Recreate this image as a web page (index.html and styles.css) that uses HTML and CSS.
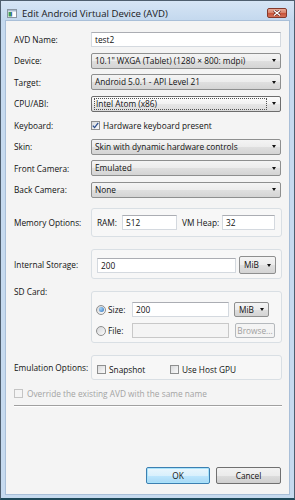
FILE: index.html
```html
<!DOCTYPE html>
<html lang="en">
<head>
    <meta charset="UTF-8">
    <title>Edit Android Virtual Device (AVD)</title>
    <link rel="stylesheet" href="styles.css">
</head>
<body>
    <div class="window">
        <!-- Barra de título -->
        <div class="titlebar">
            <svg class="app-icon" width="10" height="9" viewBox="0 0 10 9">
                <rect x="0.5" y="0.5" width="9" height="8" fill="#fdfdfd" stroke="#8a96a3"/>
                <rect x="1" y="1" width="8" height="1.5" fill="#a9bccf"/>
                <rect x="1.5" y="3" width="2.5" height="4.5" fill="#3f9b52"/>
                <rect x="4" y="3" width="1.2" height="4.5" fill="#3a78c0"/>
            </svg>
            <span class="title">Edit Android Virtual Device (AVD)</span>
            <div class="close-btn">
                <svg width="8" height="6" viewBox="0 0 8 6">
                    <path d="M1 0.5 L7 5.5 M7 0.5 L1 5.5" stroke="#5a1c12" stroke-width="2.6"/>
                    <path d="M1 0.5 L7 5.5 M7 0.5 L1 5.5" stroke="#fff" stroke-width="1.4"/>
                </svg>
            </div>
        </div>

        <div class="client">
            <div class="row">
                <span class="lbl">AVD Name:</span>
                <div class="textbox">test2</div>
            </div>
            <div class="row">
                <span class="lbl">Device:</span>
                <div class="combo"><span class="combo-text">10.1" WXGA (Tablet) (1280 × 800: mdpi)</span><span class="arrow"></span></div>
            </div>
            <div class="row">
                <span class="lbl">Target:</span>
                <div class="combo"><span class="combo-text">Android 5.0.1 - API Level 21</span><span class="arrow"></span></div>
            </div>
            <div class="row">
                <span class="lbl">CPU/ABI:</span>
                <div class="combo focus"><span class="combo-text">Intel Atom (x86)</span><span class="arrow"></span></div>
            </div>
            <div class="row">
                <span class="lbl">Keyboard:</span>
                <span class="check checked">
                    <svg width="7" height="7" viewBox="0 0 7 7"><path d="M0.8 3.6 L2.6 5.6 L6.2 0.9" fill="none" stroke="#2b4f8f" stroke-width="1.3"/></svg>
                </span>
                <span class="check-text">Hardware keyboard present</span>
            </div>
            <div class="row">
                <span class="lbl">Skin:</span>
                <div class="combo"><span class="combo-text">Skin with dynamic hardware controls</span><span class="arrow"></span></div>
            </div>
            <div class="row">
                <span class="lbl">Front Camera:</span>
                <div class="combo"><span class="combo-text">Emulated</span><span class="arrow"></span></div>
            </div>
            <div class="row">
                <span class="lbl">Back Camera:</span>
                <div class="combo"><span class="combo-text">None</span><span class="arrow"></span></div>
            </div>

            <!-- Memoria -->
            <div class="group-row memory-row">
                <span class="lbl">Memory Options:</span>
                <div class="group memory">
                    <span class="mem-lbl ram">RAM:</span>
                    <div class="textbox ram-box">512</div>
                    <span class="mem-lbl heap">VM Heap:</span>
                    <div class="textbox heap-box">32</div>
                </div>
            </div>

            <!-- Almacenamiento interno -->
            <div class="group-row storage-row">
                <span class="lbl">Internal Storage:</span>
                <div class="group storage">
                    <div class="textbox storage-box">200</div>
                    <div class="combo unit-combo"><span class="combo-text">MiB</span><span class="arrow"></span></div>
                </div>
            </div>

            <!-- Tarjeta SD -->
            <div class="group-row sd-row">
                <span class="lbl">SD Card:</span>
                <div class="group sdcard">
                    <div class="sd-line">
                        <span class="radio selected"><span class="dot"></span></span>
                        <span class="radio-text">Size:</span>
                        <div class="textbox sd-box">200</div>
                        <div class="combo sd-combo"><span class="combo-text">MiB</span><span class="arrow"></span></div>
                    </div>
                    <div class="sd-line">
                        <span class="radio"></span>
                        <span class="radio-text">File:</span>
                        <div class="textbox sd-box disabled"></div>
                        <div class="browse-btn">Browse...</div>
                    </div>
                </div>
            </div>

            <!-- Emulación -->
            <div class="group-row emu-row">
                <span class="lbl">Emulation Options:</span>
                <div class="group emulation">
                    <div class="emu-item snapshot">
                        <span class="check"></span>
                        <span class="check-text">Snapshot</span>
                    </div>
                    <div class="emu-item">
                        <span class="check"></span>
                        <span class="check-text">Use Host GPU</span>
                    </div>
                </div>
            </div>

            <div class="override-row">
                <span class="check disabled"></span>
                <span class="check-text">Override the existing AVD with the same name</span>
            </div>

            <div class="separator"></div>

            <div class="buttons">
                <div class="btn default">OK</div>
                <div class="btn cancel">Cancel</div>
            </div>
        </div>
    </div>
</body>
</html>
```

FILE: styles.css
```css
* {
    margin: 0;
    padding: 0;
    box-sizing: border-box;
}

body {
    font-family: 'Open Sans', 'Noto Sans', sans-serif;
    font-size: 8.3px;
    color: #111111;
    background-color: #ffffff;
}

.window {
    width: 295px;
    height: 500px;
    border: 1px solid #4e5e6e;
    border-bottom: 2px solid #1f4a5a;
    background-color: #c6daef;
    display: flex;
    flex-direction: column;
}

/* Barra de título */
.titlebar {
    height: 20px;
    flex: none;
    display: flex;
    align-items: center;
    padding: 4px 7px 0 6px;
    background: linear-gradient(#d6e5f5, #c3d8ee);
}

.app-icon {
    flex: none;
}

.title {
    margin-left: 5px;
    font-size: 9.6px;
    color: #1a1a1a;
}

.close-btn {
    margin-left: auto;
    width: 20px;
    height: 10px;
    border: 1px solid #84392b;
    border-radius: 2px;
    background: linear-gradient(#eaaa98, #d8846c 45%, #c9543a 55%, #d47158);
    display: flex;
    align-items: center;
    justify-content: center;
}

/* Área de cliente */
.client {
    flex: 1;
    margin: 0 5px 4px;
    background-color: #f4f4f4;
    box-shadow: 0 0 0 1px #a9bfd8;
    display: flex;
    flex-direction: column;
    padding: 10px 7px 10px 8px;
}

.row {
    display: flex;
    align-items: center;
    height: 16px;
    margin-bottom: 5.5px;
}

.lbl {
    width: 77px;
    flex: none;
}

.textbox {
    height: 15px;
    background-color: #ffffff;
    border: 1px solid #d4d9df;
    border-top-color: #abadb3;
    padding-left: 3px;
    line-height: 13px;
}

.row .textbox {
    flex: 1;
    margin-right: 1px;
}

.textbox.disabled {
    background-color: #f4f4f4;
    border-color: #c8c8c8;
}

.combo {
    height: 16px;
    border: 1px solid #8e8f8f;
    border-radius: 2px;
    background: linear-gradient(#f4f4f4, #ececec 50%, #dfdfdf 51%, #d4d4d4);
    display: flex;
    align-items: center;
    padding: 0 4px 0 2px;
}

.row .combo {
    flex: 1;
    margin-right: 1px;
}

.combo-text {
    flex: 1;
    padding-left: 1px;
    line-height: 12px;
    white-space: nowrap;
    overflow: hidden;
}

.combo.focus {
    border-color: #6d6d6d;
    background: linear-gradient(#fbfbfb, #f1f1f1 50%, #e6e6e6 51%, #dcdcdc);
}

.combo.focus .combo-text {
    border: 1px dotted #505050;
    line-height: 10px;
    margin-right: 5px;
}

.arrow {
    width: 0;
    height: 0;
    border-left: 2.5px solid transparent;
    border-right: 2.5px solid transparent;
    border-top: 3px solid #111111;
    flex: none;
}

.check {
    width: 9px;
    height: 9px;
    flex: none;
    border: 1px solid #8e8f8f;
    background: linear-gradient(135deg, #d9dadc, #fbfbfb);
    display: flex;
    align-items: center;
    justify-content: center;
}

.check.disabled {
    border-color: #c4c4c4;
    background: #f4f4f4;
}

.check-text {
    margin-left: 3px;
    white-space: nowrap;
}

/* Cajas de grupo */
.group-row {
    display: flex;
    align-items: center;
}

.group {
    flex: 1;
    border: 1px solid #d9dfe4;
    border-radius: 3px;
    background-color: #f7f7f7;
}

.memory-row {
    margin-top: 5px;
}

.memory {
    height: 29px;
    display: flex;
    align-items: center;
    padding-left: 5px;
}

.mem-lbl {
    flex: none;
}

.ram {
    width: 25px;
}

.heap {
    width: 40px;
    margin-left: 5px;
}

.ram-box {
    width: 55px;
}

.heap-box {
    width: 53px;
}

.storage-row {
    margin-top: 12px;
}

.storage {
    height: 30px;
    display: flex;
    align-items: center;
    padding: 2px 0 0 5px;
}

.storage-box {
    width: 139px;
}

.unit-combo {
    width: 37px;
    height: 18px;
    margin-left: 3px;
    padding-left: 3px;
}

.sd-row {
    margin-top: 6px;
    align-items: flex-start;
}

.sd-row .lbl {
    line-height: 14px;
}

.sdcard {
    margin-top: 6px;
    height: 52px;
    padding: 10px 0 4px 4px;
}

.sd-line {
    display: flex;
    align-items: center;
    height: 15px;
    margin-bottom: 6px;
}

.radio {
    width: 10px;
    height: 10px;
    flex: none;
    border: 1px solid #8e8f8f;
    border-radius: 50%;
    background: linear-gradient(135deg, #d6d7d9, #fbfbfb);
    display: flex;
    align-items: center;
    justify-content: center;
}

.radio .dot {
    width: 5px;
    height: 5px;
    border-radius: 50%;
    background: radial-gradient(circle at 35% 35%, #a6d5f7, #2a6fbd);
}

.radio-text {
    width: 24px;
    margin-left: 2px;
    color: #111111;
}

.sd-box {
    width: 97px;
}

.sd-combo {
    width: 35px;
    height: 15px;
    margin-left: 5px;
    padding-left: 3px;
}

.browse-btn {
    width: 40px;
    height: 15px;
    margin-left: 6px;
    border: 1px solid #b5b9bd;
    border-radius: 2px;
    background-color: #f4f4f4;
    color: #a0a0a0;
    line-height: 13px;
    text-align: center;
}

.emu-row {
    margin-top: 12px;
}

.emulation {
    height: 25px;
    display: flex;
    align-items: center;
    padding: 3px 0 0 5px;
}

.emu-item {
    display: flex;
    align-items: center;
}

.snapshot {
    width: 73px;
}

.override-row {
    margin-top: 6px;
    height: 14px;
    display: flex;
    align-items: center;
    color: #a3a3a3;
}

.override-row .check-text {
    margin-left: 4px;
}

.separator {
    margin-top: 5px;
    height: 2px;
    border-top: 1px solid #a0a0a0;
    border-bottom: 1px solid #ffffff;
}

/* Botones */
.buttons {
    margin-top: auto;
    margin-right: 1px;
    display: flex;
    justify-content: flex-end;
    gap: 6px;
}

.btn {
    height: 17px;
    border-radius: 2px;
    line-height: 15px;
    text-align: center;
}

.btn.default {
    width: 64px;
    border: 1px solid #3c7fb1;
    background: linear-gradient(#eaf6fd, #d9f0fc 50%, #bee6fd 51%, #a7d9f5);
    box-shadow: inset 0 0 0 1px #a8e3fb;
}

.btn.cancel {
    width: 65px;
    border: 1px solid #707070;
    background: linear-gradient(#f2f2f2, #ebebeb 50%, #dddddd 51%, #cfcfcf);
}
```
